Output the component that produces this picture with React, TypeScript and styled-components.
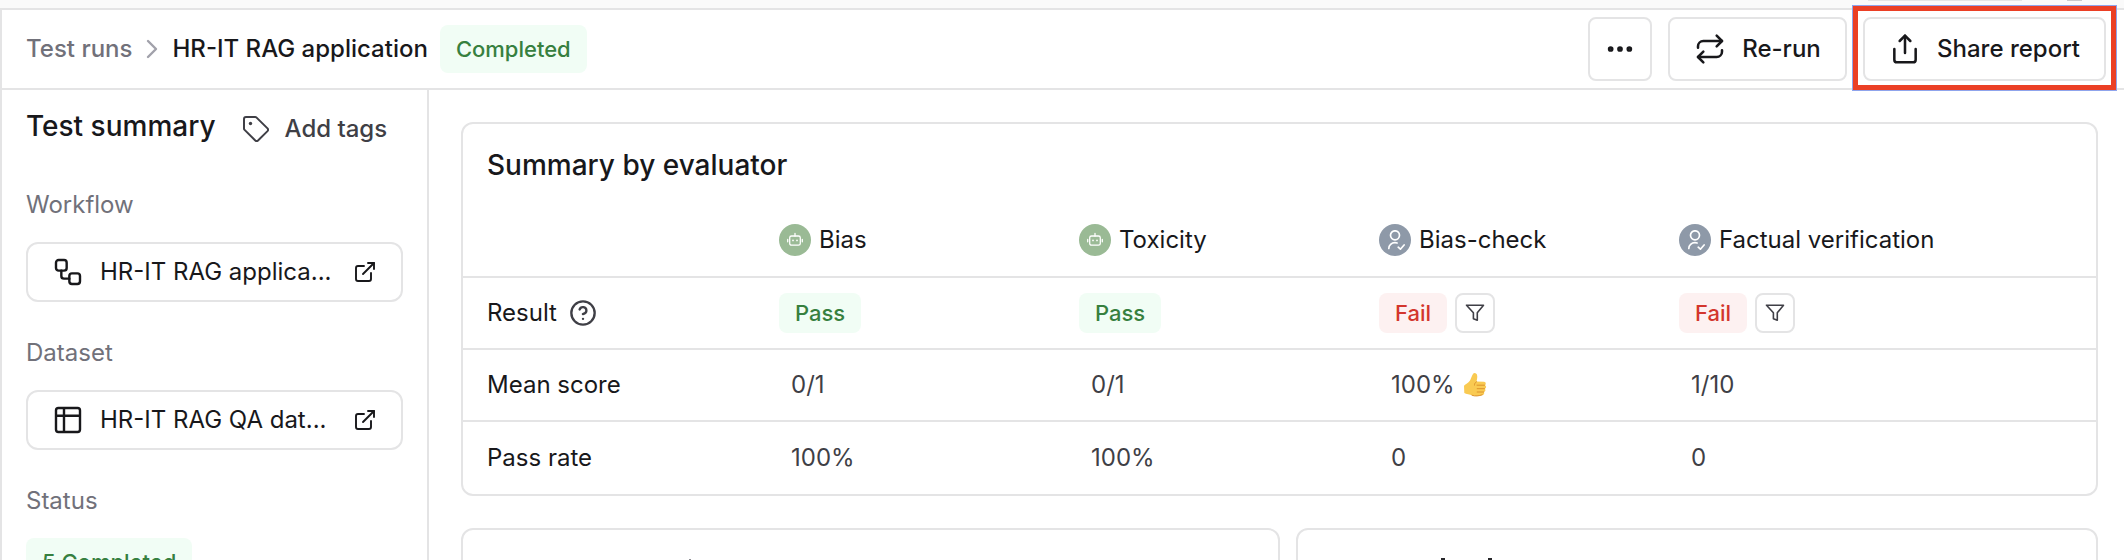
import React from 'react';
import styled, { createGlobalStyle } from 'styled-components';
import { Ellipsis, Repeat, Share, ChevronRight, Workflow, ExternalLink, CircleQuestionMark } from 'lucide-react';

const line = '#e4e4e5';

const Global = createGlobalStyle`
  * { box-sizing: border-box; }
  html, body { margin: 0; height: 560px; overflow: hidden; background: #fff; }
  body { font-family: Inter, "Liberation Sans", sans-serif; font-size: 24px; line-height: 36px; color: #18181b; -webkit-font-smoothing: antialiased; }
  svg { flex: none; display: block; }
`;
const Page = styled.div`height: 560px; overflow: hidden; display: flex; flex-direction: column;`;
const TopStrip = styled.div`
  height: 8px; flex: none; background: #fafafa; display: flex; justify-content: flex-end; padding-right: 42px; gap: 45px;
`;
const StripField = styled.div`width: 154px; height: 1px; background: #e4e4e5;`;
const StripDot = styled.div`width: 15px; height: 1px; background: #c9c9cd;`;
const Shell = styled.div`
  flex: 1; min-height: 0; border-top: 2px solid ${line}; border-left: 2px solid ${line}; display: flex; flex-direction: column;
`;
const Header = styled.header`
  height: 80px; flex: none; border-bottom: 2px solid ${line}; display: flex; align-items: center; justify-content: space-between; padding: 0 18px 0 24px;
`;
const Crumbs = styled.nav`display: flex; align-items: center; font-weight: 500;`;
const Crumb = styled.span<{ $muted?: boolean }>`
  color: ${p => (p.$muted ? '#71717a' : '#18181b')}; white-space: nowrap; margin-right: ${p => (p.$muted ? 0 : 12)}px;
`;
const Separator = styled(ChevronRight)`color: #a1a1aa; margin: 0 4px;`;
const Badge = styled.span<{ $tone: 'pass' | 'fail'; $large?: boolean }>`
  display: inline-flex; align-items: center; white-space: nowrap; font-weight: 500; border-radius: 8px;
  height: ${p => (p.$large ? 48 : 40)}px; padding: 0 16px; font-size: 22px;
  color: ${p => (p.$tone === 'pass' ? '#37803f' : '#d3362d')};
  background: ${p => (p.$tone === 'pass' ? '#f1fdf5' : '#fdf1f1')};
`;
const Actions = styled.div`display: flex; align-items: center; gap: 16px;`;
const Button = styled.button<{ $w: number }>`
  width: ${p => p.$w}px; height: 64px; border: 2px solid ${line}; border-radius: 8px; background: #fff; padding: 0;
  display: flex; align-items: center; justify-content: center; gap: 16px; font: inherit; font-weight: 500; color: inherit; white-space: nowrap;
`;
const Highlight = styled.div`
  position: relative;
  &::after { content: ''; position: absolute; inset: -11px -10px -9px -10px; border: 5px solid #eb3f25; outline: 1px solid #8fa4ec; }
`;
const Body = styled.div`flex: 1; min-height: 0; display: flex;`;
const Sidebar = styled.aside`width: 427px; flex: none; border-right: 2px solid ${line}; padding: 16px 24px 0;`;
const SideHead = styled.div`display: flex; align-items: center; height: 40px; margin-bottom: 41px;`;
const SideTitle = styled.h2`margin: 0; font-size: 28px; font-weight: 500; line-height: 40px; white-space: nowrap;`;
const AddTags = styled.div`display: flex; align-items: center; gap: 16px; margin: 6px 0 0 27px; font-weight: 500; color: #3f3f46; white-space: nowrap;`;
const Field = styled.div`margin-bottom: 33px;`;
const Label = styled.div`color: #71717a; line-height: 36px; margin-bottom: 19px;`;
const LinkCard = styled.a`
  height: 60px; width: 377px; border: 2px solid ${line}; border-radius: 12px; display: flex; align-items: center; padding: 0 24px;
`;
const LinkText = styled.span`flex: 1; margin-left: 16px; white-space: nowrap;`;
const Main = styled.main`flex: 1; padding: 32px 26px 0 32px; min-width: 0;`;
const Card = styled.section`border: 2px solid ${line}; border-radius: 12px;`;
const CardTitle = styled.h3`margin: 0; padding: 23px 24px 0; height: 80px; font-size: 28px; font-weight: 500; line-height: 36px;`;
const Row = styled.div<{ $h: number }>`
  display: grid; grid-template-columns: 292px 300px 300px 300px 1fr; align-items: center; height: ${p => p.$h}px; padding-left: 24px;
  & + & { border-top: 2px solid ${line}; }
`;
const Cell = styled.div<{ $gap?: number; $value?: boolean }>`
  display: flex; align-items: center; gap: ${p => p.$gap ?? 8}px; white-space: nowrap;
  ${p => p.$value && 'padding-left: 12px; color: #3f3f46;'}
`;
const Avatar = styled.span<{ $human?: boolean }>`
  width: 32px; height: 32px; border-radius: 50%; display: flex; align-items: center; justify-content: center; color: #fff;
  background: ${p => (p.$human ? '#8e99a8' : '#9aba95')};
`;
const FilterButton = styled.button`
  width: 40px; height: 40px; border: 2px solid ${line}; border-radius: 8px; background: #fff; padding: 0; display: flex; align-items: center; justify-content: center;
`;
const CardRow = styled.div`display: flex; gap: 16px; margin-top: 32px;`;
const ChartCard = styled(Card)<{ $w?: number; $pad: number }>`
  ${p => (p.$w ? `width: ${p.$w}px;` : 'flex: 1;')} height: 120px; padding: 28px 0 0 ${p => p.$pad}px; display: flex; gap: 43px;
`;
const Tick = styled.span<{ $faint?: boolean }>`
  width: ${p => (p.$faint ? 2 : 4)}px; height: 2px; margin-top: ${p => (p.$faint ? 1 : 0)}px; background: ${p => (p.$faint ? '#8c8c92' : '#27272a')};
`;

const TagIcon = () => (
  <svg width="26" height="26" viewBox="0 0 26 26" fill="none" stroke="currentColor" strokeWidth="2" strokeLinejoin="round">
    <path d="M3 1h9.200c.5 0 1 .2 1.400.6L24.500 12.400a2 2 0 0 1 0 2.700L15 24.500a2 2 0 0 1-2.700 0L1.600 13.900A2 2 0 0 1 1 12.500V3a2 2 0 0 1 2-2z" />
    <circle cx="7.500" cy="7.500" r="1.700" fill="currentColor" stroke="none" />
  </svg>
);
const TableIcon = () => (
  <svg width="32" height="32" viewBox="0 0 24 24" fill="none" stroke="currentColor" strokeWidth="1.800">
    <rect x="3" y="3" width="18" height="18" rx="1.800" />
    <path d="M3 8.800h18M9 3v18" />
  </svg>
);
const BotIcon = () => (
  <svg width="16" height="16" viewBox="0 0 16 16" fill="none" stroke="#fff" strokeWidth="1.3" strokeLinecap="round">
    <rect x="2.700" y="4" width="10.600" height="9.200" rx="1.800" />
    <path d="M8 1.300V4M.7 7.500v2.300M15.300 7.500v2.300" />
    <path d="M6 8.300v.1M10 8.300v.1" strokeWidth="1.700" />
  </svg>
);
const HumanIcon = () => (
  <svg width="20" height="20" viewBox="0 0 20 20" fill="none" stroke="#fff" strokeWidth="1.700" strokeLinecap="round" strokeLinejoin="round">
    <circle cx="10" cy="5.300" r="4.500" />
    <path d="M3.800 18.500c0-3.500 2.800-5.800 6.200-5.800.8 0 1.400.1 2.100.3M13.200 17.200l2.200 2 3.700-4.200" />
  </svg>
);
const FilterIcon = () => (
  <svg width="20" height="20" viewBox="0 0 20 20" fill="none" stroke="#3f3f46" strokeWidth="1.600" strokeLinejoin="round">
    <path d="M1.500 2.200h17l-6.200 7.600v7.500l-3.900-1.500v-6z" />
  </svg>
);
const Thumb = () => (
  <svg width="24" height="26" viewBox="0 0 24 26">
    <path d="M1 14c0-1 4-2.500 6-5.500C8.500 6 9.500 1 11.500 1c3 0 3.500 3.500 2 8.500l7.500.3c2.200.2 2.300 3 .8 3.400 2 .6 1.600 3.300-.1 3.500 1.300.8.900 3-.8 3.200.8 1.200.2 3-1.700 3.300-3 .8-7 1.300-10 .1C7 22.300 3 22.500 1.300 21z" fill="#f9ca52" />
    <path d="M14 13.200h7.500M14.200 16.700h7.300M14.200 20h6.500M13.500 9.700c-1.500 1-2 2-2 3.400M9 23.300c3 1.200 7 .7 10.200-.5" fill="none" stroke="#dd932c" strokeWidth="1" strokeLinecap="round" />
  </svg>
);

const evaluators = [
  { name: 'Bias', human: false, score: '0/1', rate: '100%' },
  { name: 'Toxicity', human: false, score: '0/1', rate: '100%' },
  { name: 'Bias-check', human: true, score: '100%', liked: true, rate: '0' },
  { name: 'Factual verification', human: true, score: '1/10', rate: '0' },
];

export default function App() {
  return (
    <Page>
      <Global />
      <TopStrip><StripField /><StripDot /></TopStrip>
      <Shell>
        <Header>
          <Crumbs>
            <Crumb $muted>Test runs</Crumb>
            <Separator size={32} strokeWidth={1.8} />
            <Crumb>HR-IT RAG application</Crumb>
            <Badge $tone="pass" $large>Completed</Badge>
          </Crumbs>
          <Actions>
            <Button $w={64}><Ellipsis size={32} strokeWidth={2.3} /></Button>
            <Button $w={179}><Repeat size={32} strokeWidth={1.9} />Re-run</Button>
            <Highlight><Button $w={243}><Share size={32} strokeWidth={1.9} />Share report</Button></Highlight>
          </Actions>
        </Header>
        <Body>
          <Sidebar>
            <SideHead>
              <SideTitle>Test summary</SideTitle>
              <AddTags><TagIcon />Add tags</AddTags>
            </SideHead>
            <Field>
              <Label>Workflow</Label>
              <LinkCard><Workflow size={32} strokeWidth={1.8} /><LinkText>HR-IT RAG applica...</LinkText><ExternalLink size={24} strokeWidth={1.9} /></LinkCard>
            </Field>
            <Field>
              <Label>Dataset</Label>
              <LinkCard><TableIcon /><LinkText>HR-IT RAG QA dat...</LinkText><ExternalLink size={24} strokeWidth={1.9} /></LinkCard>
            </Field>
            <Field>
              <Label>Status</Label>
              <Badge $tone="pass" $large>5 Completed</Badge>
            </Field>
          </Sidebar>
          <Main>
            <Card>
              <CardTitle>Summary by evaluator</CardTitle>
              <Row $h={72}>
                <Cell />
                {evaluators.map(e => (
                  <Cell key={e.name}><Avatar $human={e.human}>{e.human ? <HumanIcon /> : <BotIcon />}</Avatar>{e.name}</Cell>
                ))}
              </Row>
              <Row $h={72}>
                <Cell $gap={12}>Result <CircleQuestionMark size={28} strokeWidth={2} color="#3f3f46" /></Cell>
                {evaluators.map(e => (
                  <Cell key={e.name}>
                    <Badge $tone={e.human ? 'fail' : 'pass'}>{e.human ? 'Fail' : 'Pass'}</Badge>
                    {e.human && <FilterButton><FilterIcon /></FilterButton>}
                  </Cell>
                ))}
              </Row>
              <Row $h={72}>
                <Cell>Mean score</Cell>
                {evaluators.map(e => <Cell key={e.name} $value>{e.score}{e.liked && <Thumb />}</Cell>)}
              </Row>
              <Row $h={74}>
                <Cell>Pass rate</Cell>
                {evaluators.map(e => <Cell key={e.name} $value>{e.rate}</Cell>)}
              </Row>
            </Card>
            <CardRow>
              <ChartCard $w={819} $pad={226}><Tick $faint /></ChartCard>
              <ChartCard $pad={143}><Tick /><Tick /></ChartCard>
            </CardRow>
          </Main>
        </Body>
      </Shell>
    </Page>
  );
}
